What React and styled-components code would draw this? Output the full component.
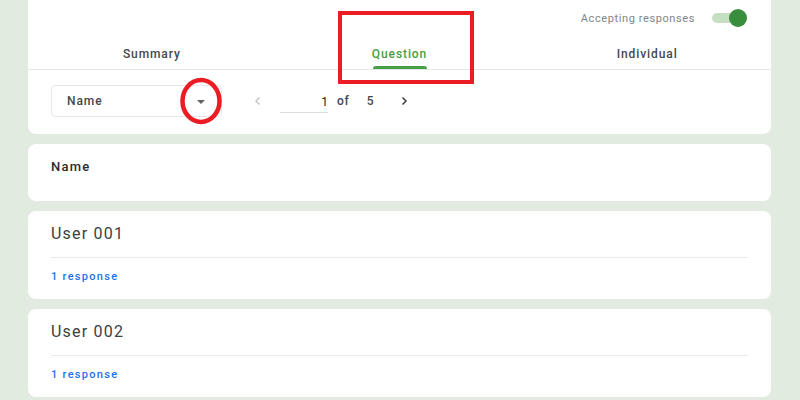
import React from "react";
import styled, { createGlobalStyle } from "styled-components";

const Global = createGlobalStyle`
  html, body { margin: 0; padding: 0; background: #e2ebdf; }
  body { font-family: Roboto, "Liberation Sans", Arial, sans-serif; width: 800px; height: 400px; overflow: hidden; }
`;

const Page = styled.div`
  position: relative;
  width: 800px;
  height: 400px;
  padding: 0 29px 0 28px;
  box-sizing: border-box;
  display: flex;
  flex-direction: column;
  gap: 10px;
`;

const Card = styled.div`
  background: #fff;
  border-radius: ${(p) => (p.$top ? "0 0 8px 8px" : "8px")};
  box-sizing: border-box;
  flex-shrink: 0;
`;

const StatusRow = styled.div`
  height: 20px;
  margin-top: 8px;
  display: flex;
  align-items: center;
  justify-content: flex-end;
  padding-right: 23px;
  gap: 17px;
`;

const StatusLabel = styled.span`
  font-size: 11px;
  color: #80868b;
  letter-spacing: 0.6px;
`;

const Toggle = styled.div`
  position: relative;
  width: 36px;
  height: 18px;
  display: flex;
  align-items: center;
`;

const Track = styled.div`
  width: 28px;
  height: 10px;
  border-radius: 5px;
  background: #c6dfc3;
`;

const Knob = styled.div`
  position: absolute;
  right: 1px;
  top: 0;
  width: 18px;
  height: 18px;
  border-radius: 50%;
  background: #388e3c;
`;

const Tabs = styled.div`
  display: flex;
  height: 41px;
  border-bottom: 1px solid #e6e6e6;
`;

const Tab = styled.div`
  flex: 1;
  position: relative;
  display: flex;
  justify-content: center;
  align-items: center;
  padding-top: 11px;
  box-sizing: border-box;
  font-size: 12px;
  font-weight: 500;
  letter-spacing: 0.9px;
  color: ${(p) => (p.$active ? "#43a047" : "#45484c")};
`;

const Underline = styled.div`
  position: absolute;
  bottom: 0;
  left: 50%;
  transform: translateX(-50%);
  width: 54px;
  height: 3px;
  border-radius: 3px 3px 0 0;
  background: #43a047;
`;

const Toolbar = styled.div`
  display: flex;
  align-items: center;
  padding: 15px 23px 17px;
`;

const Select = styled.div`
  position: relative;
  width: 171px;
  height: 32px;
  box-sizing: border-box;
  border: 1px solid #e8e8e8;
  border-radius: 4px;
  display: flex;
  align-items: center;
  justify-content: space-between;
  padding: 0 16px 0 15px;
  font-size: 12px;
  font-weight: 500;
  letter-spacing: 0.9px;
  color: #45484c;
`;

const Caret = styled.span`
  width: 0;
  height: 0;
  border-left: 4px solid transparent;
  border-right: 4px solid transparent;
  border-top: 4px solid #5f6368;
  margin-top: 1px;
`;

const NavButton = styled.div`
  width: 24px;
  height: 24px;
  display: flex;
  align-items: center;
  justify-content: center;
  margin-left: ${(p) => p.$ml}px;
`;

const PageInput = styled.div`
  width: 48px;
  height: 22px;
  margin-left: 10px;
  box-sizing: border-box;
  border-bottom: 1px solid #dadce0;
  display: flex;
  align-items: center;
  justify-content: flex-end;
  padding-right: 0;
  font-size: 12px;
  color: #202124;
  margin-top: 2px;
`;

const PagerText = styled.span`
  font-size: 12px;
  font-weight: 500;
  color: #45484c;
  letter-spacing: 0.8px;
  margin-left: ${(p) => p.$ml}px;
`;

const QuestionCard = styled(Card)`
  height: 57px;
  padding: 15px 23px 0;
  font-size: 13px;
  font-weight: 500;
  letter-spacing: 1.2px;
  color: #2a2c2f;
  line-height: 16px;
`;

const AnswerCard = styled(Card)`
  height: 88px;
  padding: 13px 23px 0;
`;

const AnswerText = styled.div`
  font-size: 16px;
  line-height: 20px;
  color: #3c4043;
  letter-spacing: 1.2px;
`;

const Divider = styled.div`
  height: 1px;
  background: #e8eaed;
  margin-top: 13px;
`;

const ResponseCount = styled.div`
  margin-top: 12px;
  font-size: 11px;
  line-height: 14px;
  font-weight: 500;
  letter-spacing: 1.3px;
  color: #1a73e8;
`;

const Annotations = styled.svg`
  position: absolute;
  left: 0;
  top: 0;
  pointer-events: none;
`;

const Chevron = ({ dir, color }) => (
  <svg width="12" height="12" viewBox="0 0 12 12">
    <path
      d={dir === "left" ? "M7.5 2.5 L4 6 L7.5 9.5" : "M4.5 2.5 L8 6 L4.5 9.5"}
      fill="none"
      stroke={color}
      strokeWidth="1.5"
    />
  </svg>
);

const answers = ["User 001", "User 002"];

export default function App() {
  return (
    <>
      <Global />
      <Page>
        <Card $top>
          <StatusRow>
            <StatusLabel>Accepting responses</StatusLabel>
            <Toggle>
              <Track />
              <Knob />
            </Toggle>
          </StatusRow>
          <Tabs>
            <Tab>Summary</Tab>
            <Tab $active>
              Question
              <Underline />
            </Tab>
            <Tab>Individual</Tab>
          </Tabs>
          <Toolbar>
            <Select>
              Name
              <Caret />
            </Select>
            <NavButton $ml={24}>
              <Chevron dir="left" color="#c4c7c5" />
            </NavButton>
            <PageInput>1</PageInput>
            <PagerText $ml={9}>of</PagerText>
            <PagerText $ml={17}>5</PagerText>
            <NavButton $ml={18}>
              <Chevron dir="right" color="#3c4043" />
            </NavButton>
          </Toolbar>
        </Card>
        <QuestionCard>Name</QuestionCard>
        {answers.map((a) => (
          <AnswerCard key={a}>
            <AnswerText>{a}</AnswerText>
            <Divider />
            <ResponseCount>1 response</ResponseCount>
          </AnswerCard>
        ))}
        <Annotations width="800" height="400">
          <rect x="340" y="13" width="132" height="69" fill="none" stroke="#ec1c24" strokeWidth="4" />
          <ellipse cx="201" cy="101" rx="18.5" ry="21" fill="none" stroke="#ec1c24" strokeWidth="4.5" />
        </Annotations>
      </Page>
    </>
  );
}
